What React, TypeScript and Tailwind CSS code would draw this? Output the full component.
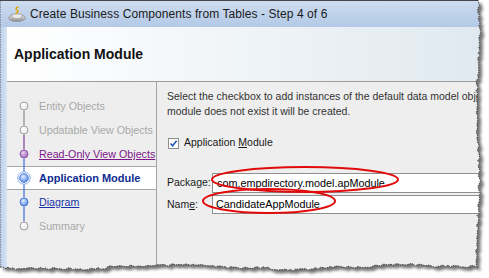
import React from "react";

const W = 478;
const H = 267;

function makeEdge() {
  let s = 11;
  const rnd = () => {
    s = (s * 9301 + 49297) % 233280;
    return s / 233280;
  };
  const pts: [number, number][] = [[0, 0], [W, 0]];
  for (let y = 3; y < H; y += 2.5) {
    const x = W + Math.sin(y / 23) * 1.4 + (rnd() - 0.5) * 2.6;
    pts.push([x, y]);
  }
  for (let x = W; x > 0; x -= 2.5) {
    const y = H + Math.sin(x / 37) * 2.2 + Math.sin(x / 11) * 0.8 + (rnd() - 0.5) * 2.4;
    pts.push([x, y]);
  }
  pts.push([0, H + 1]);
  return pts;
}

const edge = makeEdge();
const edgePoly = edge.map(([x, y]) => `${x.toFixed(1)},${y.toFixed(1)}`).join(" ");
const edgeClip = `polygon(${edge.map(([x, y]) => `${x.toFixed(1)}px ${y.toFixed(1)}px`).join(", ")})`;

type Step = {
  label: string;
  top: string | null;
  bottom: string | null;
  kind: "hollow" | "visited" | "current" | "link";
};

const steps: Step[] = [
  { label: "Entity Objects", top: null, bottom: "#8a8a8a", kind: "hollow" },
  { label: "Updatable View Objects", top: "#8a8a8a", bottom: "#7b3f98", kind: "hollow" },
  { label: "Read-Only View Objects", top: "#7b3f98", bottom: "#3f6fd6", kind: "visited" },
  { label: "Application Module", top: "#3f6fd6", bottom: "#3f6fd6", kind: "current" },
  { label: "Diagram", top: "#3f6fd6", bottom: "#3f6fd6", kind: "link" },
  { label: "Summary", top: "#3f6fd6", bottom: null, kind: "hollow" },
];

function StepDot({ step, i }: { step: Step; i: number }) {
  const r = step.kind === "current" ? 6 : 4.5;
  return (
    <svg width="14" height="24" viewBox="0 0 14 24" className="shrink-0">
      <defs>
        <radialGradient id={`g${i}`} cx="40%" cy="35%" r="70%">
          {step.kind === "visited" && (
            <>
              <stop offset="0%" stopColor="#e6d2ee" />
              <stop offset="100%" stopColor="#9a62b4" />
            </>
          )}
          {(step.kind === "link" || step.kind === "current") && (
            <>
              <stop offset="0%" stopColor="#e4efff" />
              <stop offset="100%" stopColor="#4f86e0" />
            </>
          )}
          {step.kind === "hollow" && (
            <>
              <stop offset="0%" stopColor="#ffffff" />
              <stop offset="100%" stopColor="#e4e4e4" />
            </>
          )}
        </radialGradient>
      </defs>
      {step.top && <line x1="7" y1="0" x2="7" y2={12 - r} stroke={step.top} strokeWidth="1.2" />}
      {step.bottom && <line x1="7" y1={12 + r} x2="7" y2="24" stroke={step.bottom} strokeWidth="1.2" />}
      {step.kind === "current" && (
        <circle cx="7" cy="12" r="6.2" fill="#ffffff" stroke="#7ea6e6" strokeWidth="1" />
      )}
      <circle
        cx="7"
        cy="12"
        r={step.kind === "current" ? 4.3 : 4}
        fill={`url(#g${i})`}
        stroke={step.kind === "hollow" ? "#9a9a9a" : step.kind === "visited" ? "#8a55a6" : "#3f6fd6"}
        strokeWidth="0.9"
      />
    </svg>
  );
}

function AppIcon() {
  return (
    <svg width="18" height="16" viewBox="0 0 18 16">
      <defs>
        <linearGradient id="cup" x1="0" y1="0" x2="0" y2="1">
          <stop offset="0%" stopColor="#f4f4f4" />
          <stop offset="100%" stopColor="#8e8e8e" />
        </linearGradient>
      </defs>
      <ellipse cx="9" cy="12" rx="8.3" ry="3.4" fill="url(#cup)" stroke="#7a7a7a" strokeWidth="0.6" />
      <path d="M3.5 8.5 Q9 7 14.5 8.5 L13.5 12 Q9 13.4 4.5 12 Z" fill="#e8e8e8" stroke="#8a8a8a" strokeWidth="0.6" />
      <path d="M10 1 Q6.5 2.5 9 4.2 Q11.5 5.8 8 7.5" fill="none" stroke="#e2a400" strokeWidth="1.4" strokeLinecap="round" />
    </svg>
  );
}

export default function App() {
  return (
    <div className="relative h-[278px] w-[489px] overflow-hidden bg-white" style={{ fontFamily: '"Liberation Sans", Arial, sans-serif' }}>
      <svg className="absolute left-0 top-0" width="489" height="278">
        <defs>
          <filter id="sh" x="-5%" y="-5%" width="110%" height="110%">
            <feGaussianBlur stdDeviation="1.6" />
          </filter>
        </defs>
        <polygon points={edgePoly} transform="translate(3.5 3.5)" fill="#000" opacity="0.55" filter="url(#sh)" />
      </svg>

      <div
        className="relative flex h-[272px] w-[482px] flex-col border-t border-[#4b4f55] bg-[#eeeeee]"
        style={{ clipPath: edgeClip }}
      >
        <div className="flex h-[26px] shrink-0 items-center gap-[4px] bg-gradient-to-b from-[#cddcf0] to-[#b3c9e6] pl-[8px] text-[12px] text-[#1b1b1b]">
          <AppIcon />
          <span className="tracking-[0.08px]">Create Business Components from Tables - Step 4 of 6</span>
        </div>

        <div className="flex flex-1">
          <div className="w-[7px] shrink-0 bg-gradient-to-r from-[#bcd0ea] to-[#d6e3f3]" />

          <div className="flex flex-1 flex-col">
            <div className="flex h-[55px] shrink-0 items-center border-b border-[#9c9c9c] bg-gradient-to-r from-white to-[#d7e3ec] pl-[7px]">
              <span className="text-[14px] font-bold text-[#111]">Application Module</span>
            </div>

            <div className="flex flex-1">
              <div className="w-[150px] shrink-0 border-r border-[#a3a3a3] pt-[12px] text-[10.7px]">
                {steps.map((s, i) => (
                  <div
                    key={s.label}
                    className={
                      s.kind === "current"
                        ? "flex h-[24px] items-center gap-[8px] border-y border-[#a8a8a8] bg-white pl-[10px]"
                        : "flex h-[24px] items-center gap-[8px] pl-[10px]"
                    }
                  >
                    <StepDot step={s} i={i} />
                    {s.kind === "hollow" && <span className="whitespace-nowrap text-[#a9a9a9]">{s.label}</span>}
                    {s.kind === "visited" && <span className="whitespace-nowrap text-[#7b1689] underline">{s.label}</span>}
                    {s.kind === "current" && <span className="whitespace-nowrap text-[11px] font-bold text-[#0d2c8f]">{s.label}</span>}
                    {s.kind === "link" && <span className="whitespace-nowrap text-[#1732a6] underline">{s.label}</span>}
                  </div>
                ))}
              </div>

              <div className="flex-1 overflow-hidden pl-[10px] pr-[6px] pt-[7px] text-[10.5px] text-[#333]">
                <p className="whitespace-nowrap leading-[15px]">
                  Select the checkbox to add instances of the default data model objects to the application module
                </p>
                <p className="whitespace-nowrap leading-[15px]">module does not exist it will be created.</p>

                <div className="mt-[16px] flex h-[16px] items-center gap-[5px] pl-[1px]">
                  <span className="flex h-[11px] w-[11px] items-center justify-center border border-[#8e8f8f] bg-white">
                    <svg width="9" height="9" viewBox="0 0 9 9">
                      <path d="M1.5 4.5 L3.6 6.8 L7.6 1.8" fill="none" stroke="#2458b8" strokeWidth="1.6" />
                    </svg>
                  </span>
                  <span className="text-[#1a1a1a]">
                    Application <span className="underline">M</span>odule
                  </span>
                </div>

                <div className="mt-[22px] flex items-center">
                  <span className="w-[45px] shrink-0 text-[#1a1a1a]">
                    Packa<span className="underline">g</span>e:
                  </span>
                  <div className="flex h-[20px] flex-1 items-center border border-[#8f8f8f] bg-white pl-[4px] text-[10.8px] text-black">
                    com.empdirectory.model.apModule
                  </div>
                </div>
                <div className="mt-[2px] flex items-center">
                  <span className="w-[45px] shrink-0 text-[#1a1a1a]">
                    Nam<span className="underline">e</span>:
                  </span>
                  <div className="flex h-[19px] flex-1 items-center border border-[#8f8f8f] bg-white pl-[3px] text-[10.8px] text-black">
                    CandidateAppModule
                  </div>
                </div>
              </div>
            </div>
          </div>
        </div>
      </div>

      <svg className="pointer-events-none absolute left-0 top-0" width="489" height="278">
        <polygon points={edgePoly} fill="none" stroke="#2a2a2a" strokeWidth="0.8" strokeDasharray="1.5 1" />
        <ellipse cx="305" cy="179.5" rx="93" ry="12.5" fill="none" stroke="#e10b0b" strokeWidth="2" />
        <ellipse cx="269" cy="201" rx="66" ry="12" fill="none" stroke="#e10b0b" strokeWidth="2" />
      </svg>
    </div>
  );
}
